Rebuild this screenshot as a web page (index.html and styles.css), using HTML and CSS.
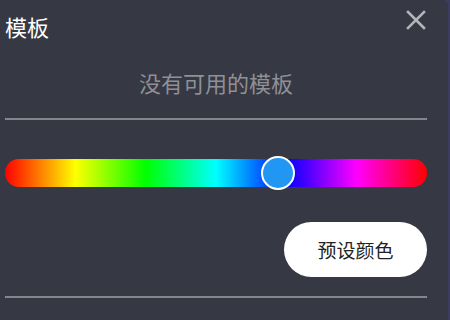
FILE: index.html
```html
<!DOCTYPE html>
<html lang="zh-CN">
<head>
  <meta charset="UTF-8">
  <title>模板</title>
  <link rel="stylesheet" href="styles.css">
</head>
<body>
  <div class="panel">
    <header class="header">
      <h1 class="title">模板</h1>
      <button class="close" aria-label="关闭">
        <svg width="20" height="20" viewBox="0 0 20 20">
          <path d="M2 2 L18 18 M18 2 L2 18" stroke="#b4b5b9" stroke-width="2.6" stroke-linecap="square"/>
        </svg>
      </button>
    </header>
    <p class="empty">没有可用的模板</p>
    <div class="divider"></div>
    <div class="slider">
      <div class="track"></div>
      <div class="thumb" style="left: 64.7%"></div>
    </div>
    <div class="actions">
      <button class="preset">预设颜色</button>
    </div>
    <div class="divider"></div>
  </div>
</body>
</html>
```
FILE: styles.css
```css
html, body, h1, p {
  margin: 0;
  padding: 0;
}

body {
  width: 450px;
  height: 320px;
  background: #3b3c60;
  font-family: "Noto Sans CJK SC", "Noto Sans", sans-serif;
  overflow: hidden;
}

.panel {
  width: 448px;
  height: 320px;
  box-sizing: border-box;
  padding: 0 21px 0 5px;
  background: #363844;
  border-top-right-radius: 6px;
}

.header {
  display: flex;
  justify-content: space-between;
  align-items: flex-start;
  height: 48px;
}
.title {
  margin-top: 10px;
  font-size: 22px;
  font-weight: 400;
  line-height: 32px;
  color: #fff;
}
.close {
  margin-top: 10px;
  margin-right: 1px;
  padding: 0;
  border: none;
  background: none;
  width: 20px;
  height: 20px;
}

.empty {
  margin-top: 18px;
  text-align: center;
  font-size: 22px;
  line-height: 32px;
  color: #8f9095;
}

.divider {
  height: 2px;
  background: #85868c;
}
.empty + .divider {
  margin-top: 20px;
}

.slider {
  position: relative;
  margin-top: 39px;
  height: 28px;
}
.track {
  height: 28px;
  border-radius: 14px;
  background: linear-gradient(to right,
    #ff0000 0%, #ffff00 16.7%, #00ff00 33.3%, #00ffff 50%,
    #0000ff 66.7%, #ff00ff 83.3%, #ff0000 100%);
}
.thumb {
  position: absolute;
  top: 50%;
  width: 30px;
  height: 30px;
  margin: -17px 0 0 -17px;
  border: 2px solid #fff;
  border-radius: 50%;
  background: #2196f3;
}

.actions {
  display: flex;
  justify-content: flex-end;
  margin-top: 35px;
}
.preset {
  width: 143px;
  height: 55px;
  border: none;
  border-radius: 28px;
  background: #fff;
  color: #222;
  font-family: inherit;
  font-size: 19px;
}
.actions + .divider {
  margin-top: 19px;
}
```
